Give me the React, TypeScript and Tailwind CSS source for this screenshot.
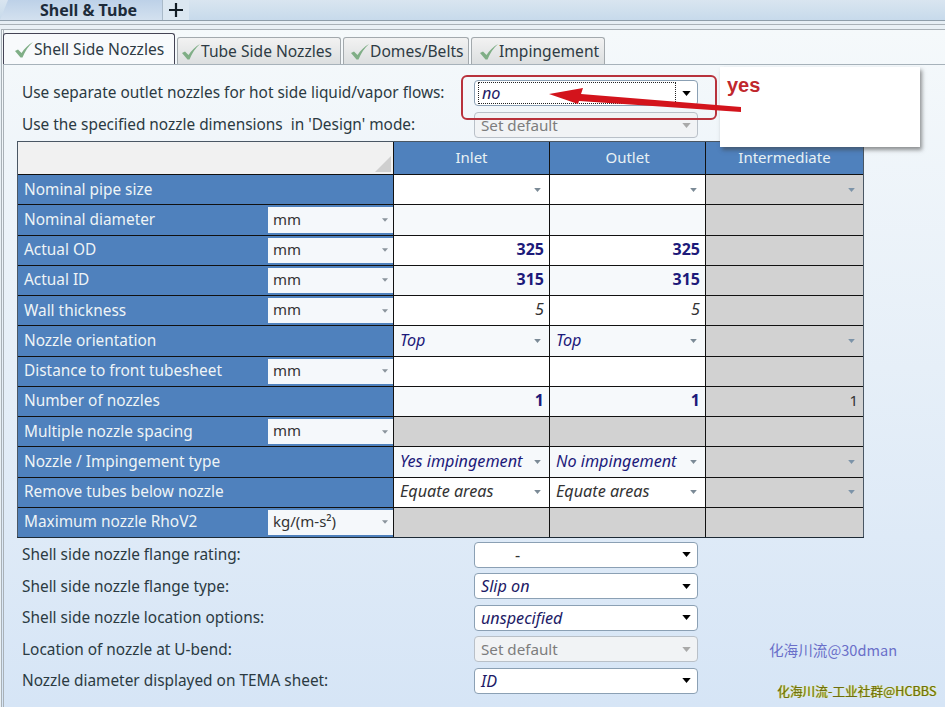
import React from 'react';

const font = "font-['Noto_Sans','Open_Sans',sans-serif]";

function Caret({ className }: { className: string }) {
  return (
    <svg viewBox="0 0 10 6" className={className}>
      <path d="M0 0h10L5 6z" fill="currentColor" />
    </svg>
  );
}

function Check() {
  return (
    <svg viewBox="0 0 18 16" className="w-[18px] h-[16px] shrink-0">
      <path d="M0 9l3-1.5L6.5 11C9.5 6.5 13 3 18 0c-4.500 4-8 9-10.500 15.500H5.500z" fill="#7fae86" />
    </svg>
  );
}

function FormSelect({ value, kind = 'normal' }: { value: string; kind?: 'normal' | 'disabled' | 'focus' | 'dash' }) {
  const disabled = kind === 'disabled';
  return (
    <div
      className={`w-[224px] h-[26px] rounded-[4px] border flex items-center pl-[6px] pr-[5px] ${
        disabled ? 'border-[#b9c0c8] bg-[#f1f3f5] text-[#7d7d7d] text-[15.2px]' : 'border-[#8ba0b4] bg-white text-[#1d1a66] italic text-[16.2px]'
      }`}
    >
      <span
        className={`flex-1 flex items-center h-[22px] ${kind === 'focus' ? 'border border-dotted border-[#222] -ml-[3px] pl-[3px] mr-[1px]' : ''} ${
          kind === 'dash' ? 'pl-[34px] not-italic text-[#333]' : ''
        }`}
      >
        {value}
      </span>
      <Caret className={`w-[9px] h-[5px] ml-[5px] mr-[1px] ${disabled ? 'text-[#a9a9a9]' : 'text-black'}`} />
    </div>
  );
}

function FormRow({ label, children, h }: { label: string; children: React.ReactNode; h: string }) {
  return (
    <div className={`flex items-center ${h}`}>
      <span className="w-[452px] text-[15.4px] text-[#2b3a42] whitespace-pre">{label}</span>
      {children}
    </div>
  );
}

type Cell = {
  text?: string;
  kind?: 'white' | 'gray' | 'blank';
  align?: 'r' | 'l';
  bold?: boolean;
  italic?: boolean;
  caret?: boolean;
  plain?: boolean;
};

const gray: Cell = { kind: 'gray' };
const grayCaret: Cell = { kind: 'gray', caret: true };
const blank: Cell = { kind: 'white' };
const soft: Cell = { kind: 'blank' };

const rows: { label: string; unit?: string; cells: Cell[] }[] = [
  { label: 'Nominal pipe size', cells: [{ caret: true }, { caret: true }, grayCaret] },
  { label: 'Nominal diameter', unit: 'mm', cells: [soft, soft, gray] },
  { label: 'Actual OD', unit: 'mm', cells: [{ text: '325', align: 'r', bold: true }, { text: '325', align: 'r', bold: true }, gray] },
  { label: 'Actual ID', unit: 'mm', cells: [{ text: '315', align: 'r', bold: true, kind: 'blank' }, { text: '315', align: 'r', bold: true, kind: 'blank' }, gray] },
  { label: 'Wall thickness', unit: 'mm', cells: [{ text: '5', align: 'r', italic: true, plain: true }, { text: '5', align: 'r', italic: true, plain: true }, gray] },
  { label: 'Nozzle orientation', cells: [{ text: 'Top', italic: true, caret: true, kind: 'blank' }, { text: 'Top', italic: true, caret: true, kind: 'blank' }, grayCaret] },
  { label: 'Distance to front tubesheet', unit: 'mm', cells: [blank, blank, gray] },
  { label: 'Number of nozzles', cells: [{ text: '1', align: 'r', bold: true, kind: 'blank' }, { text: '1', align: 'r', bold: true, kind: 'blank' }, { text: '1', align: 'r', kind: 'gray', plain: true }] },
  { label: 'Multiple nozzle spacing', unit: 'mm', cells: [gray, gray, gray] },
  { label: 'Nozzle / Impingement type', cells: [{ text: 'Yes impingement', italic: true, caret: true, kind: 'blank' }, { text: 'No impingement', italic: true, caret: true, kind: 'blank' }, grayCaret] },
  { label: 'Remove tubes below nozzle', cells: [{ text: 'Equate areas', italic: true, caret: true, plain: true }, { text: 'Equate areas', italic: true, caret: true, plain: true }, grayCaret] },
  { label: 'Maximum nozzle RhoV2', unit: 'kg/(m-s²)', cells: [gray, gray, gray] },
];

function ValueCell({ cell, last }: { cell: Cell; last: boolean }) {
  const bg = cell.kind === 'gray' ? 'bg-[#d2d2d2]' : cell.kind === 'blank' ? 'bg-[#f6f9fb]' : 'bg-white';
  const color = cell.plain ? 'text-[#333]' : 'text-[#1d1a7a]';
  const size = cell.italic ? 'italic text-[16.2px]' : cell.bold ? 'font-bold text-[16px]' : 'text-[15px]';
  return (
    <div className={`flex items-center pl-[6px] pr-[5px] border-t border-t-[#111] ${last ? '' : 'border-r border-r-[#111]'} ${bg}`}>
      <span className={`flex-1 pb-[2px] whitespace-nowrap ${color} ${cell.align === 'r' ? 'text-right' : ''} ${size}`}>{cell.text}</span>
      {cell.caret && <Caret className={`w-[7px] h-[4px] mr-[3px] ${cell.kind === 'gray' ? 'text-[#7c93a8]' : 'text-[#7b8a96]'}`} />}
    </div>
  );
}

const inactive = 'h-[27px] ml-[2px] border-[#a3a9ad] bg-gradient-to-b from-[#f2f2f2] to-[#dcdfe0]';
const tabs = [
  { name: 'Shell Side Nozzles', cls: 'h-[31px] w-[172px] border-[#445] bg-[#f8fafc] pl-[11px] pt-[1px]' },
  { name: 'Tube Side Nozzles', cls: `${inactive} w-[164px] pl-[4px] pt-[1px]` },
  { name: 'Domes/Belts', cls: `${inactive} w-[126px] pl-[7px] pt-[1px]` },
  { name: 'Impingement', cls: `${inactive} w-[134px] pl-[8px] pt-[1px]` },
];

export default function App() {
  return (
    <div className={`relative w-[945px] h-[707px] overflow-hidden bg-[#e9f0f5] ${font}`}>
      {/* top document tab strip */}
      <div className="h-[21px] flex bg-gradient-to-b from-[#d9e5f0] to-[#c7daeb] border-b border-[#8f9eaa]">
        <div className="w-[162px] pl-[40px] flex items-center font-bold text-[16px] leading-[18px] text-[#1d2b3a] bg-gradient-to-b from-[#bdd1e8] to-[#d3e1ef] [clip-path:polygon(8px_0,100%_0,100%_100%,0_100%)]">
          Shell &amp; Tube
        </div>
        <div className="w-[27px] bg-[#dbe7f1] border-l border-[#a9bac9] flex items-center justify-center">
          <svg viewBox="0 0 14 14" className="w-[14px] h-[14px]">
            <path d="M7 0v14M0 7h14" stroke="#111c24" strokeWidth="2.2" />
          </svg>
        </div>
      </div>
      <div className="h-[4px] bg-[#e6eef4] border-b border-[#a9b1b7]" />

      {/* page body */}
      <div className="mt-[4px] ml-[1px] h-[678px] border-l-[3px] border-double border-t border-[#a9b1b7] bg-gradient-to-b from-[#f5f9fb] via-[#e6eff8] to-[#d6e5f6] pt-[4px]">
        <div className="flex items-end h-[31px] -ml-[1px] border-b border-[#a7b2ba]">
          {tabs.map((t) => (
            <div key={t.name} className={`flex items-center rounded-t-[3px] border border-b-0 text-[15.6px] text-[#2e3b44] ${t.cls}`}>
              <Check />
              <span className="whitespace-nowrap ml-[1px]">{t.name}</span>
            </div>
          ))}
        </div>

        <div className="pl-[18px] pt-[15px]">
          <FormRow label="Use separate outlet nozzles for hot side liquid/vapor flows:" h="h-[26px]">
            <FormSelect value="no" kind="focus" />
          </FormRow>
          <div className="mt-[6px]">
            <FormRow label="Use the specified nozzle dimensions  in 'Design' mode:" h="h-[26px]">
              <FormSelect value="Set default" kind="disabled" />
            </FormRow>
          </div>

          {/* nozzle table */}
          <div className="mt-[3px] -ml-[5px] w-[847px] h-[397px] border border-[#4a5764] border-b-2 border-b-[#1d2a35] grid grid-cols-[376px_156px_156px_157px] grid-rows-[32px_repeat(12,30.25px)]">
            <div className="relative bg-[#f1f1f1] border-r border-[#111]">
              <div className="absolute right-[2px] bottom-[2px] w-0 h-0 border-l-[16px] border-l-transparent border-b-[16px] border-b-[#cfcfcf]" />
            </div>
            {['Inlet', 'Outlet', 'Intermediate'].map((h, i) => (
              <div key={h} className={`flex items-center justify-center pb-[1px] bg-[#4f81bd] text-[15px] text-[#e8f1f4] ${i < 2 ? 'border-r border-[#111]' : ''}`}>
                {h}
              </div>
            ))}
            {rows.map((row) => (
              <React.Fragment key={row.label}>
                <div className="flex items-stretch bg-[#4f81bd] border-t border-t-[#111] border-r border-r-[#111] pl-[6px]">
                  <span className="flex-1 flex items-center pb-[1px] text-[15.4px] text-[#eef4f6] whitespace-nowrap">{row.label}</span>
                  {row.unit && (
                    <div className="w-[125px] flex items-center bg-[#f5f8fb] pl-[5px] pr-[5px] text-[15px] text-[#333] my-[2px]">
                      <span className="flex-1 pb-[2px]">{row.unit}</span>
                      <Caret className="w-[6px] h-[4px] text-[#8a949c]" />
                    </div>
                  )}
                </div>
                {row.cells.map((c, i) => (
                  <ValueCell key={i} cell={c} last={i === 2} />
                ))}
              </React.Fragment>
            ))}
          </div>

          <div className="mt-[1px] flex flex-col">
            <FormRow label="Shell side nozzle flange rating:" h="h-[31.5px]"><FormSelect value="-" kind="dash" /></FormRow>
            <FormRow label="Shell side nozzle flange type:" h="h-[31.5px]"><FormSelect value="Slip on" /></FormRow>
            <FormRow label="Shell side nozzle location options:" h="h-[31.5px]"><FormSelect value="unspecified" /></FormRow>
            <FormRow label="Location of nozzle at U-bend:" h="h-[31.5px]"><FormSelect value="Set default" kind="disabled" /></FormRow>
            <FormRow label="Nozzle diameter displayed on TEMA sheet:" h="h-[31.5px]"><FormSelect value="ID" /></FormRow>
          </div>
        </div>
      </div>

      {/* pasted annotation on top of the screenshot */}
      <div className="absolute left-[720px] top-[67px] w-[200px] h-[80px] bg-white shadow-[2px_3px_4px_rgba(60,60,60,0.55)] pl-[7px] pt-[3px]">
        <span className="font-['Liberation_Sans',sans-serif] font-bold text-[20px] text-[#c0272d]">yes</span>
      </div>
      <div className="absolute left-[461px] top-[75px] w-[256px] h-[45px] rounded-[6px] border-[2.5px] border-[#b8323c]" />
      <svg className="absolute left-[545px] top-[82px] w-[200px] h-[36px]" viewBox="0 0 200 36">
        <path d="M4 12L38 6l-2 6 160 13v5L34 19l-1 3z" fill="#d3141c" />
      </svg>

      {/* watermarks */}
      <span className="absolute left-[769px] top-[639px] text-[14.6px] text-[#6a6fc9] font-['Noto_Sans_CJK_SC',sans-serif]">化海川流@30dman</span>
      <span className="absolute left-[777px] top-[681px] text-[12.7px] text-[#6e6e10] [text-shadow:1px_0_0_#d8d820] font-['Noto_Sans_CJK_SC',sans-serif]">化海川流-工业社群@HCBBS</span>
    </div>
  );
}
